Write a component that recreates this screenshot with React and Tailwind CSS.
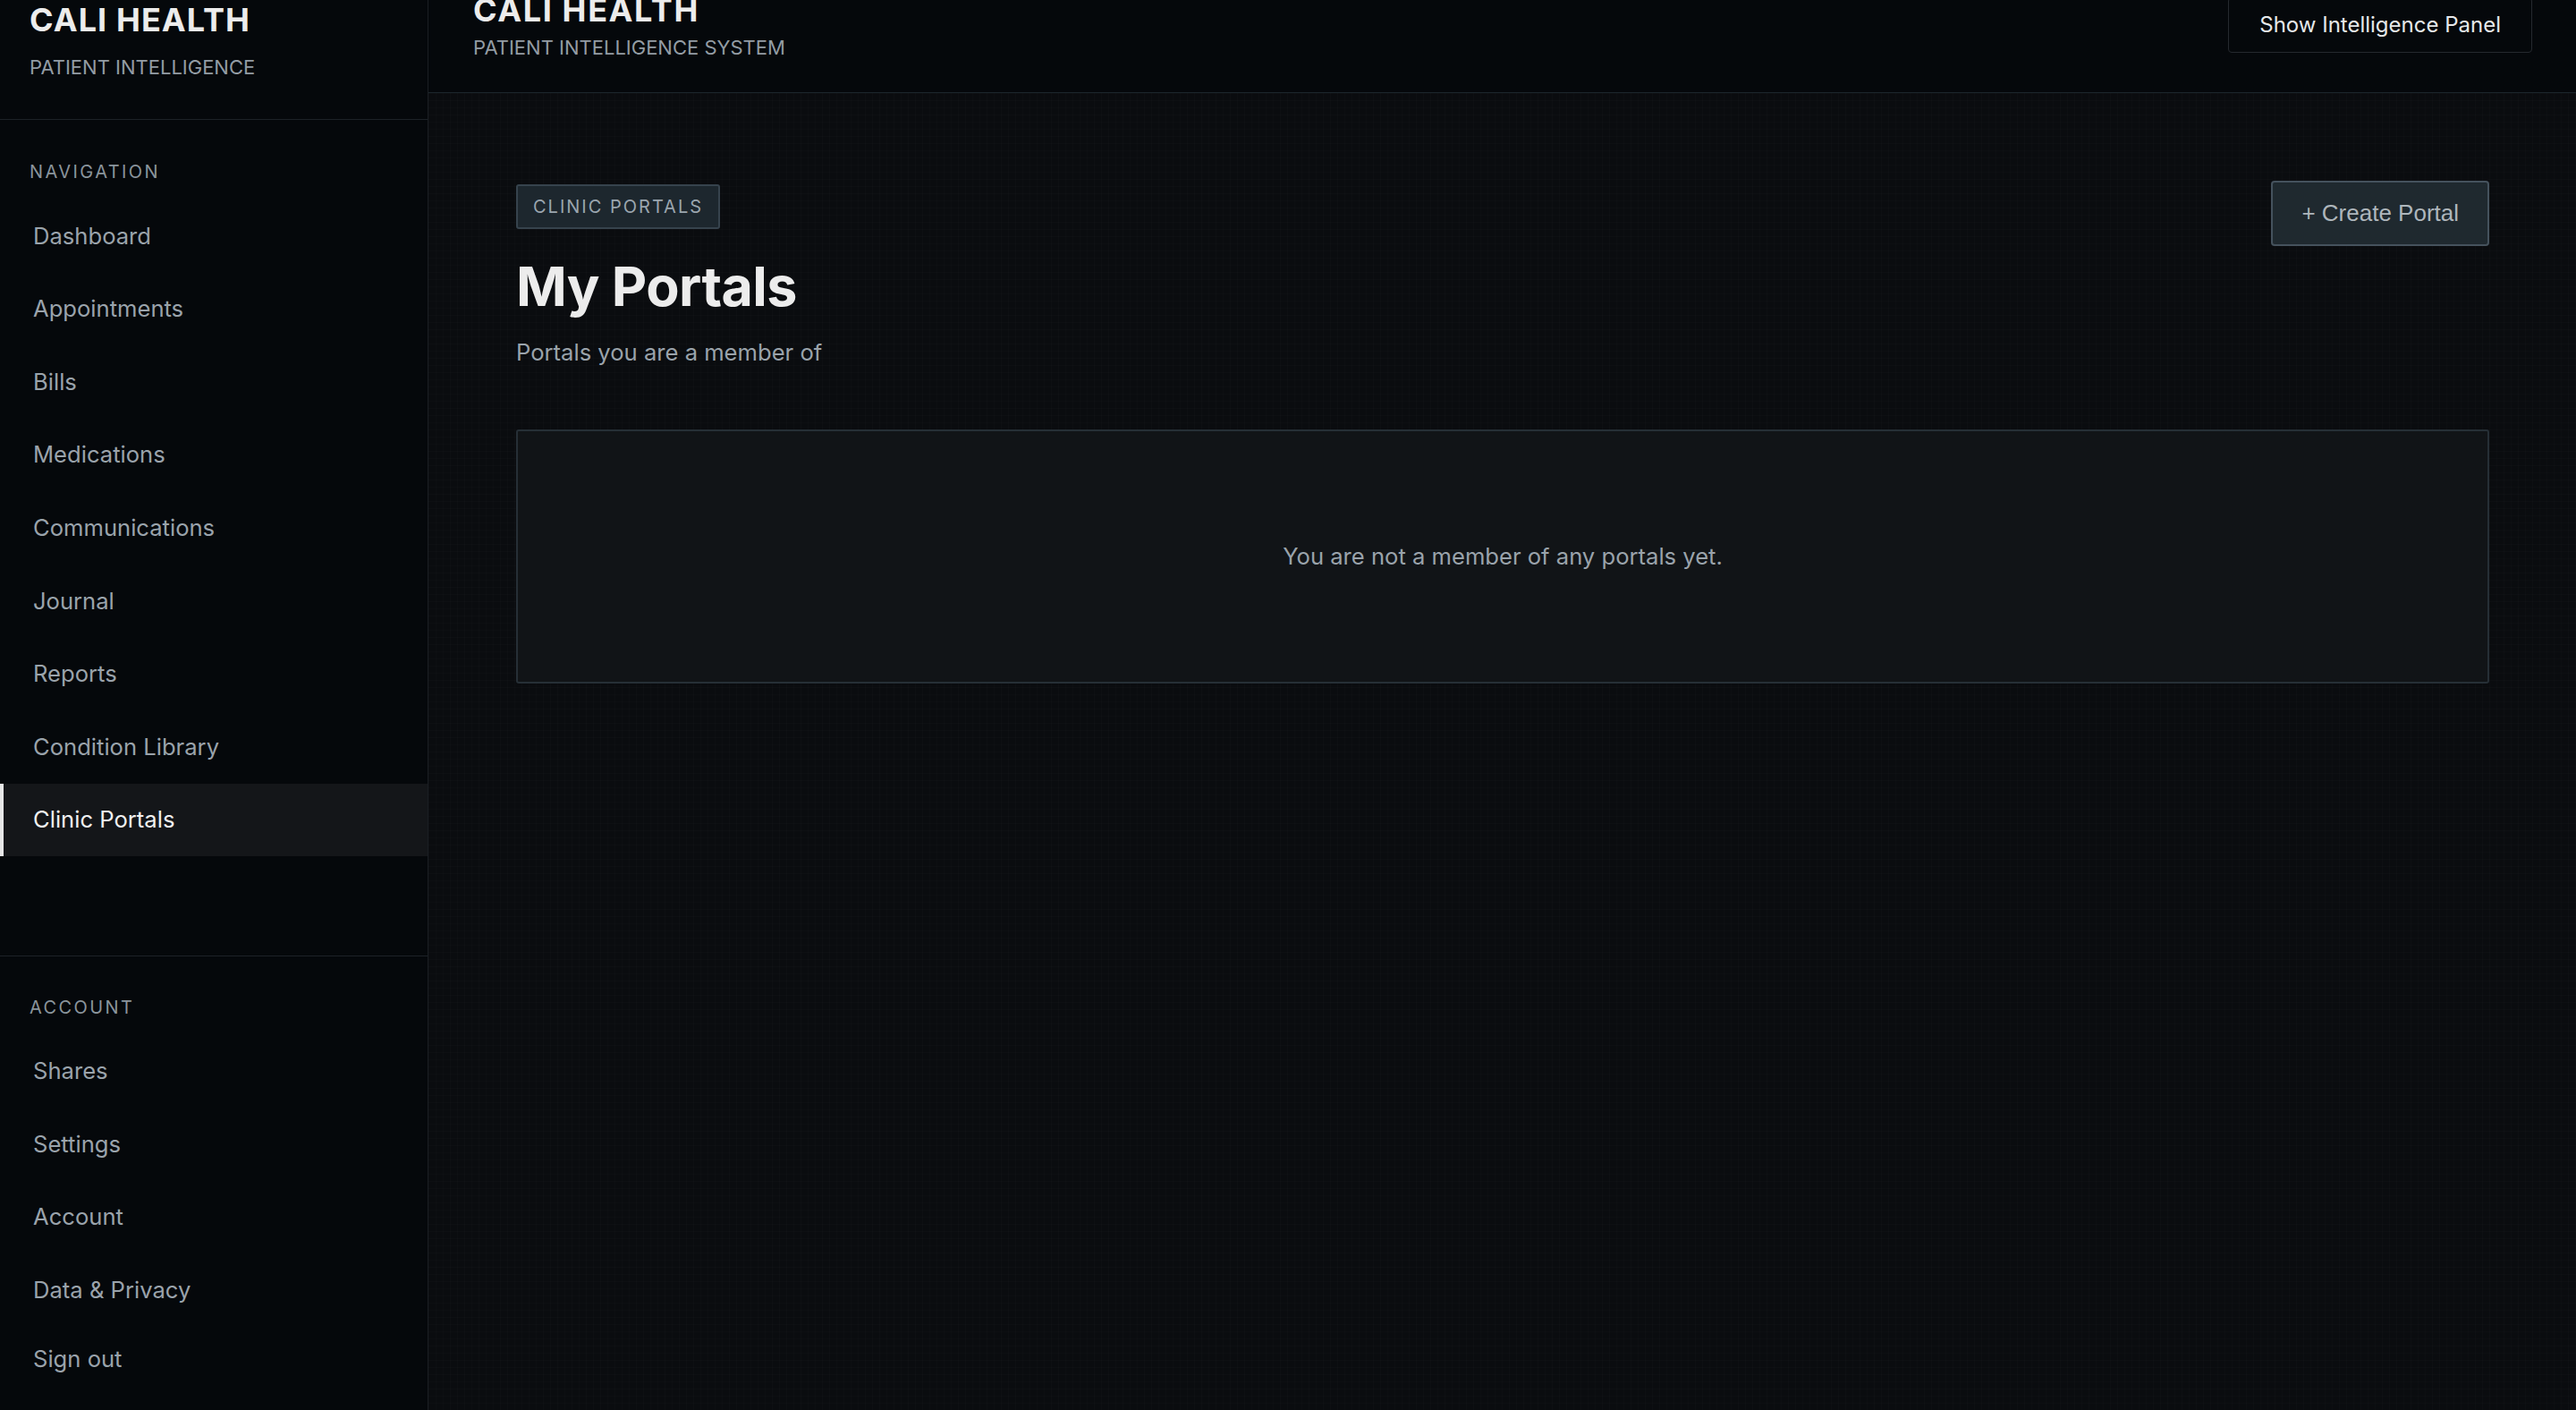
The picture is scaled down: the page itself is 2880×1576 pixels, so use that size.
import React from "react";

const navItems = [
  "Dashboard",
  "Appointments",
  "Bills",
  "Medications",
  "Communications",
  "Journal",
  "Reports",
  "Condition Library",
  "Clinic Portals",
];

const accountItems = ["Shares", "Settings", "Account", "Data & Privacy"];

export default function App() {
  return (
    <div className="flex h-[1623px] -mt-[47px] w-full overflow-hidden bg-[#0a0c0f] font-['Inter',sans-serif]">
      {/* Sidebar */}
      <aside className="flex w-[479px] shrink-0 flex-col border-r border-[#1a1e23] bg-[#05080b]">
        <div className="h-[181px] border-b border-[#1d2227] px-[33px] pt-[51px]">
          <div className="text-[36px] font-bold leading-[36px] tracking-[0.03em] text-[#ececec]">
            CALI HEALTH
          </div>
          <div className="mt-[24px] text-[22px] leading-[22px] text-[#939ca4]">
            PATIENT INTELLIGENCE
          </div>
        </div>

        <nav className="flex flex-1 flex-col pt-[48px]">
          <div className="px-[33px] text-[20px] leading-[20px] tracking-[0.12em] text-[#8a949c]">
            NAVIGATION
          </div>
          <div className="mt-[21px] flex flex-col">
            {navItems.map((item) => {
              const active = item === "Clinic Portals";
              return (
                <div
                  key={item}
                  className={
                    active
                      ? "flex h-[81.6px] items-center border-l-4 border-[#e6e6e6] bg-[#141619] pl-[33px] text-[25.6px] text-[#f0f0f0]"
                      : "flex h-[81.6px] items-center border-l-4 border-transparent pl-[33px] text-[25.6px] text-[#9aa3ab]"
                  }
                >
                  {item}
                </div>
              );
            })}
          </div>
        </nav>

        <div className="border-t border-[#1d2227] pt-[47px] pb-[21px]">
          <div className="px-[33px] text-[20px] leading-[20px] tracking-[0.12em] text-[#8a949c]">
            ACCOUNT
          </div>
          <div className="mt-[21px] flex flex-col">
            {accountItems.map((item) => (
              <div
                key={item}
                className="flex h-[81.6px] items-center border-l-4 border-transparent pl-[33px] text-[25.6px] text-[#9aa3ab]"
              >
                {item}
              </div>
            ))}
            <div className="flex h-[72px] items-center border-l-4 border-transparent pl-[33px] text-[25.6px] text-[#9aa3ab]">
              Sign out
            </div>
          </div>
        </div>
      </aside>

      {/* Main */}
      <div className="flex min-w-0 flex-1 flex-col">
        <header className="flex h-[151px] shrink-0 items-center justify-between border-b border-[#1c252c] bg-[#05080b] pl-[50px] pr-[49px]">
          <div className="flex flex-col">
            <div className="text-[36px] font-bold leading-[36px] tracking-[0.045em] text-[#ececec]">
              CALI HEALTH
            </div>
            <div className="mt-[13px] text-[22px] leading-[22px] text-[#939ca4]">
              PATIENT INTELLIGENCE SYSTEM
            </div>
          </div>
          <button className="flex h-[62px] items-center rounded-[4px] border border-[#25292e] bg-[#05080b] px-[34px] text-[24px] text-[#e6e8ea]">
            Show Intelligence Panel
          </button>
        </header>

        <main className="flex-1 bg-[#0a0c0f] bg-[linear-gradient(rgba(255,255,255,0.012)_1px,transparent_1px),linear-gradient(90deg,rgba(255,255,255,0.012)_1px,transparent_1px)] bg-[size:8px_8px] pl-[98px] pr-[97px] pt-[98px]">
          <div className="flex items-start justify-between">
            <div className="flex flex-col pt-[4px]">
              <div className="flex">
                <div className="flex h-[50px] items-center rounded-[3px] border-2 border-[#36434d] bg-[#1d272e] px-[17px] text-[20px] tracking-[0.1em] text-[#9aa5ae]">
                  CLINIC PORTALS
                </div>
              </div>
              <h1 className="mt-[33px] text-[61px] font-bold leading-[62px] tracking-[-0.01em] text-[#ececec]">
                My Portals
              </h1>
              <p className="mt-[30px] text-[25.6px] leading-[25px] text-[#9aa3ab]">
                Portals you are a member of
              </p>
            </div>
            <button className="flex h-[73px] items-center rounded-[4px] border-2 border-[#45525d] bg-[#1f292f] px-[32px] font-['Liberation_Sans',Arial,sans-serif] text-[26px] text-[#aeb6bc]">
              + Create Portal
            </button>
          </div>

          <div className="mt-[74px] flex h-[284px] items-center justify-center rounded-[3px] border-2 border-[#262f36] bg-[#111417] text-[25.6px] text-[#9aa3ab]">
            You are not a member of any portals yet.
          </div>
        </main>
      </div>
    </div>
  );
}
